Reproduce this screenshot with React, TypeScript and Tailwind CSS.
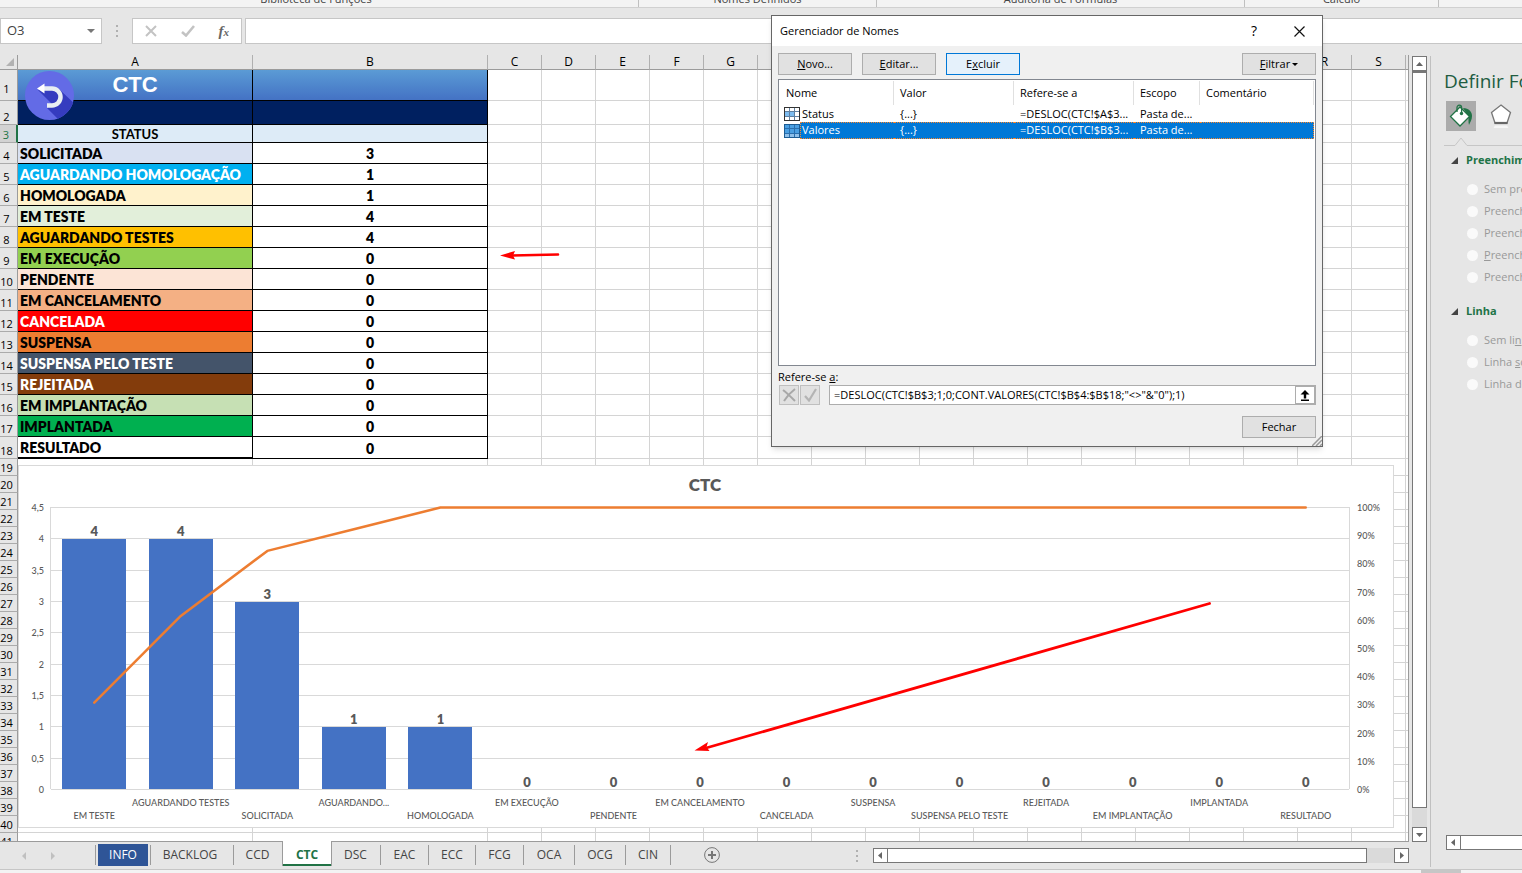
import type { ReactNode } from "react";
import { clsx } from "clsx";

const COLUMNS = "ABCDEFGHIJKLMNOPQRS".split("");

interface StatusRow {
  label: string;
  value: number;
  style: string;
}

const STATUS_ROWS: StatusRow[] = [
  { label: "SOLICITADA", value: 3, style: "bg-[#d9e1f2] text-black" },
  { label: "AGUARDANDO HOMOLOGAÇÃO", value: 1, style: "bg-[#00b0f0] text-white" },
  { label: "HOMOLOGADA", value: 1, style: "bg-[#fff2cc] text-black" },
  { label: "EM TESTE", value: 4, style: "bg-[#e2efda] text-black" },
  { label: "AGUARDANDO TESTES", value: 4, style: "bg-[#ffc000] text-black" },
  { label: "EM EXECUÇÃO", value: 0, style: "bg-[#92d050] text-black" },
  { label: "PENDENTE", value: 0, style: "bg-[#fce4d6] text-black" },
  { label: "EM CANCELAMENTO", value: 0, style: "bg-[#f4b084] text-black" },
  { label: "CANCELADA", value: 0, style: "bg-[#ff0000] text-white" },
  { label: "SUSPENSA", value: 0, style: "bg-[#ed7d31] text-black" },
  { label: "SUSPENSA PELO TESTE", value: 0, style: "bg-[#44546a] text-white" },
  { label: "REJEITADA", value: 0, style: "bg-[#833c0c] text-white" },
  { label: "EM IMPLANTAÇÃO", value: 0, style: "bg-[#c6e0b4] text-black" },
  { label: "IMPLANTADA", value: 0, style: "bg-[#00b050] text-black" },
  { label: "RESULTADO", value: 0, style: "bg-white text-black" },
];

const CHART_DATA = [
  { label: "EM TESTE", value: 4 },
  { label: "AGUARDANDO TESTES", value: 4 },
  { label: "SOLICITADA", value: 3 },
  { label: "AGUARDANDO...", value: 1 },
  { label: "HOMOLOGADA", value: 1 },
  { label: "EM EXECUÇÃO", value: 0 },
  { label: "PENDENTE", value: 0 },
  { label: "EM CANCELAMENTO", value: 0 },
  { label: "CANCELADA", value: 0 },
  { label: "SUSPENSA", value: 0 },
  { label: "SUSPENSA PELO TESTE", value: 0 },
  { label: "REJEITADA", value: 0 },
  { label: "EM IMPLANTAÇÃO", value: 0 },
  { label: "IMPLANTADA", value: 0 },
  { label: "RESULTADO", value: 0 },
];

const LEFT_TICKS = ["0", "0,5", "1", "1,5", "2", "2,5", "3", "3,5", "4", "4,5"];

const PLOT = { left: 33, top: 42, width: 1298, height: 282 };

function Ribbon() {
  return (
    <div className="flex h-2 shrink-0 overflow-hidden border-b border-[#d0d0d0] bg-[#f3f3f3] text-[11px] text-[#444444]">
      {[
        { label: "Biblioteca de Funções", width: "w-[639px] pr-1.5" },
        { label: "Nomes Definidos", width: "w-[238px]" },
        { label: "Auditoria de Fórmulas", width: "w-[368px]" },
        { label: "Cálculo", width: "w-[194px]" },
      ].map((g) => (
        <div
          key={g.label}
          className={clsx(
            "flex h-full shrink-0 items-end justify-center border-r border-[#c0c0c0] leading-4",
            g.width,
          )}
        >
          {g.label}
        </div>
      ))}
    </div>
  );
}

function FormulaBar() {
  return (
    <div className="flex h-[47px] shrink-0 items-start pt-2.5">
      <div className="flex h-[26px] w-[102px] items-center border border-[#c6c6c6] bg-white">
        <input
          aria-label="Caixa de nome"
          defaultValue="O3"
          className="w-20 bg-transparent pl-1.5 text-[13px] text-[#444444] outline-none"
        />
        <svg viewBox="0 0 8 4" className="ml-1.5 h-1 w-2 fill-[#777777]">
          <path d="M0 0h8L4 4z" />
        </svg>
      </div>
      <svg viewBox="0 0 2 12" className="mx-3.5 mt-[7px] h-3 w-0.5 fill-[#b0b0b0]">
        <path d="M0 0h2v2H0zM0 5h2v2H0zM0 10h2v2H0z" />
      </svg>
      <div className="flex h-[26px] w-[110px] items-center justify-between border border-[#c6c6c6] bg-white px-3">
        <button aria-label="Cancelar">
          <svg viewBox="0 0 12 12" className="h-3 w-3" fill="none" stroke="#c3c3c3" strokeWidth="2">
            <path d="M1 1l10 10M11 1L1 11" />
          </svg>
        </button>
        <button aria-label="Inserir">
          <svg viewBox="0 0 14 12" className="h-3 w-3.5" fill="none" stroke="#c3c3c3" strokeWidth="2.600">
            <path d="M1 7l4 3.500L13 1" />
          </svg>
        </button>
        <button
          aria-label="Inserir função"
          className="font-['Liberation_Serif',serif] text-[15px] leading-4 font-bold text-[#666666] italic"
        >
          f<span className="text-[11px]">x</span>
        </button>
      </div>
      <input
        aria-label="Barra de fórmulas"
        className="ml-[3px] h-[26px] min-w-0 flex-1 border border-r-0 border-[#c6c6c6] bg-white px-2 outline-none"
      />
    </div>
  );
}

function rowHeight(row: number) {
  if (row === 1) return "h-[31px] pb-1";
  if (row === 2) return "h-6";
  if (row === 3) return "h-[18px]";
  if (row < 18) return "h-[21px]";
  if (row === 18) return "h-[22px]";
  return "h-[17px]";
}

function dataCells(row: number): ReactNode {
  const black = "border-r border-b border-black p-0 whitespace-nowrap";
  if (row === 1) {
    return (
      <>
        <td
          className={clsx(
            black,
            "bg-linear-to-b from-[#5b9bd5] to-[#4472c4] text-center align-top font-['Liberation_Sans',sans-serif] text-[22px] leading-[29px] font-bold text-white",
          )}
        >
          CTC
        </td>
        <td className={clsx(black, "bg-linear-to-b from-[#5b9bd5] to-[#4472c4]")} />
      </>
    );
  }
  if (row === 2) {
    return (
      <>
        <td className={clsx(black, "bg-[#002060]")} />
        <td className={clsx(black, "bg-[#002060]")} />
      </>
    );
  }
  if (row === 3) {
    return (
      <>
        <td className={clsx(black, "bg-[#ddebf7] text-center text-[13px] leading-4 font-bold")}>
          STATUS
        </td>
        <td className={clsx(black, "bg-[#ddebf7]")} />
      </>
    );
  }
  const item = STATUS_ROWS[row - 4];
  if (item) {
    return (
      <>
        <td
          className={clsx(
            black,
            "pt-0.5 pl-0.5 text-sm leading-[18px] font-extrabold",
            item.style,
            row === 18 && "border-b-2",
          )}
        >
          {item.label}
        </td>
        <td className={clsx(black, "bg-white pt-0.5 text-center text-sm leading-[18px] font-extrabold")}>
          {item.value}
        </td>
      </>
    );
  }
  return (
    <>
      <td className="border-r border-b border-[#d4d4d4] bg-white p-0" />
      <td className="border-r border-b border-[#d4d4d4] bg-white p-0" />
    </>
  );
}

function Grid() {
  const rows = Array.from({ length: 41 }, (_, i) => i + 1);
  return (
    <table className="w-full table-fixed border-separate border-spacing-0 font-[Lato,sans-serif] text-black">
      <colgroup>
        <col className="w-[18px]" />
        {COLUMNS.map((c) => (
          <col key={c} className={c === "A" || c === "B" ? "w-[235px]" : "w-[54px]"} />
        ))}
        <col />
      </colgroup>
      <thead>
        <tr>
          <th className="h-[15px] border-r border-b border-[#9b9b9b] bg-[#e6e6e6] p-0">
            <svg viewBox="0 0 8 8" className="ml-1.5 h-2 w-2 fill-[#b2b2b2]">
              <path d="M8 0v8H0z" />
            </svg>
          </th>
          {COLUMNS.map((c) => (
            <th
              key={c}
              className="h-[15px] border-r border-b border-r-[#b0b0b0] border-b-[#9b9b9b] bg-[#e6e6e6] p-0 font-['Open_Sans',sans-serif] text-xs leading-3 font-normal"
            >
              {c}
            </th>
          ))}
          <th className="border-b border-[#9b9b9b] bg-[#e6e6e6] p-0" />
        </tr>
      </thead>
      <tbody>
        {rows.map((row) => (
          <tr key={row}>
            <th
              className={clsx(
                "border-b border-[#ababab] p-0 pr-1 align-bottom font-['Open_Sans',sans-serif] text-[11px] leading-[14px] font-normal",
                rowHeight(row),
                row === 3
                  ? "border-r-2 border-r-[#217346] bg-[#d2d2d2] text-[#217346]"
                  : "border-r border-r-[#9b9b9b] bg-[#e6e6e6]",
              )}
            >
              <div className="flex justify-center whitespace-nowrap">{row}</div>
            </th>
            {dataCells(row)}
            {COLUMNS.slice(2).map((c) => (
              <td key={c} className="border-r border-b border-[#d4d4d4] bg-white p-0" />
            ))}
            <td className="border-b border-[#d4d4d4] bg-white p-0" />
          </tr>
        ))}
      </tbody>
    </table>
  );
}

function BackButton() {
  return (
    <button aria-label="Voltar" className="absolute top-4 left-[25px] h-[49px] w-[49px]">
      <svg viewBox="0 0 49 49" className="h-full w-full">
        <defs>
          <clipPath id="disc">
            <circle cx="24.500" cy="24.500" r="24.500" />
          </clipPath>
        </defs>
        <circle cx="24.500" cy="24.500" r="24.500" fill="#636be6" />
        <path
          clipPath="url(#disc)"
          fill="#353cbf"
          d="M13 19L27 33l-5 4 14 14h16V35L34 18z"
        />
        <path d="M18 17.500h9a8.500 8.500 0 0 1 0 17h-5" fill="none" stroke="#e9eff2" strokeWidth="4.500" />
        <path d="M12 17.500l7.500-5v10z" fill="#ffffff" />
      </svg>
    </button>
  );
}

function ParetoChart() {
  const step = PLOT.width / CHART_DATA.length;
  const bottom = PLOT.top + PLOT.height;
  const total = CHART_DATA.reduce((sum, d) => sum + d.value, 0);
  const centre = (i: number) => PLOT.left + step * (i + 0.5);

  let running = 0;
  const points = CHART_DATA.map((d, i) => {
    running += d.value;
    return `${centre(i)},${bottom + 0.5 - (running / total) * PLOT.height}`;
  }).join(" ");

  return (
    <svg
      viewBox="0 0 1376 363"
      className="absolute top-[410px] left-[18px] h-[363px] w-[1376px] bg-white font-[Lato,sans-serif]"
      fill="#595959"
    >
      <rect x="0.500" y="0.500" width="1375" height="362" fill="none" stroke="#d9d9d9" />
      <text x="687" y="26" textAnchor="middle" className="text-[17px] font-extrabold">
        CTC
      </text>
      {LEFT_TICKS.map((t, i) => {
        const y = Math.round(bottom - (i * PLOT.height) / 9);
        return (
          <g key={t}>
            <path
              d={`M${PLOT.left} ${y + 0.5}H${PLOT.left + PLOT.width}`}
              stroke="#d9d9d9"
            />
            <text x="26" y={y + 4} textAnchor="end" className="text-[9px] font-medium">
              {t}
            </text>
          </g>
        );
      })}
      <path
        d={`M${PLOT.left - 0.5} ${PLOT.top}V${bottom}M${PLOT.left + PLOT.width + 0.5} ${PLOT.top}V${bottom}`}
        stroke="#d9d9d9"
      />
      {Array.from({ length: 11 }, (_, i) => (
        <text
          key={i}
          x="1339"
          y={Math.round(bottom - (i * PLOT.height) / 10) + 4}
          className="text-[9px] font-medium"
        >
          {i * 10}%
        </text>
      ))}
      {CHART_DATA.map((d, i) => {
        const top = Math.round(bottom - (d.value / 4.5) * PLOT.height);
        return (
          <g key={d.label} textAnchor="middle">
            {d.value > 0 && (
              <rect
                x={Math.round(centre(i) - 32)}
                y={top + 1}
                width="64"
                height={bottom - top - 1}
                fill="#4472c4"
              />
            )}
            <text x={centre(i)} y={top - 2} className="text-[13px] font-extrabold">
              {d.value}
            </text>
            <text x={centre(i)} y={i % 2 ? 341 : 354} className="text-[9px] font-medium">
              {d.label}
            </text>
          </g>
        );
      })}
      <polyline
        points={points}
        fill="none"
        stroke="#ed7d31"
        strokeWidth="2.500"
        strokeLinejoin="round"
        strokeLinecap="round"
      />
      {/* annotation arrow */}
      <path d="M1191.500 138.500L688 283" stroke="#ff0000" strokeWidth="2.800" strokeLinecap="round" />
      <path d="M676.500 285.500l13.500-8.500-1.500 5 3 4z" fill="#ff0000" />
    </svg>
  );
}

function ScrollArrow({ dir, label }: { dir: "up" | "down" | "left" | "right"; label: string }) {
  const paths = {
    up: "M3 9h7L6.500 5z",
    down: "M3 5h7L6.500 9z",
    left: "M8 3v7L4 6.500z",
    right: "M5 3v7l4-3.500z",
  };
  return (
    <button
      aria-label={label}
      className="h-[15px] w-[15px] shrink-0 border border-[#777777] bg-white"
    >
      <svg viewBox="0 0 13 13" className="h-[13px] w-[13px] fill-[#666666]">
        <path d={paths[dir]} />
      </svg>
    </button>
  );
}

function SheetTabs() {
  const tabs = [
    { name: "BACKLOG", width: "w-[83px] pr-1" },
    { name: "CCD", width: "w-[49px] pr-0.5" },
    { name: "CTC", width: "w-12" },
    { name: "DSC", width: "w-[50px]" },
    { name: "EAC", width: "w-12" },
    { name: "ECC", width: "w-[47px]" },
    { name: "FCG", width: "w-12" },
    { name: "OCA", width: "w-[51px]" },
    { name: "OCG", width: "w-[51px]" },
    { name: "CIN", width: "w-[45px]" },
  ];
  return (
    <div className="flex h-[27px] shrink-0 items-start text-xs text-[#444444]">
      <div className="flex h-full w-[95px] items-center gap-[25px] pl-[22px]">
        <svg viewBox="0 0 4 8" className="h-2 w-1 fill-[#c0c0c0]">
          <path d="M4 0v8L0 4z" />
        </svg>
        <svg viewBox="0 0 4 8" className="h-2 w-1 fill-[#c0c0c0]">
          <path d="M0 0v8l4-4z" />
        </svg>
      </div>
      <div className="mt-[3px] h-5 w-px bg-[#9b9b9b]" />
      <button className="mx-0.5 mt-0.5 h-[22px] w-[50px] bg-[#2f5597] text-white">INFO</button>
      <div className="mt-[3px] h-5 w-px bg-[#9b9b9b]" />
      {tabs.map((t) =>
        t.name === "CTC" ? (
          <button
            key={t.name}
            className="relative -mt-px h-[25px] w-12 border-b-2 border-[#217346] bg-white pt-1 leading-4 font-bold text-[#217346] shadow-[-1px_0_0_#9b9b9b,1px_0_0_#9b9b9b]"
          >
            {t.name}
          </button>
        ) : (
          <button
            key={t.name}
            className={clsx(
              "mt-[3px] h-5",
              t.name !== "CCD" && "border-r border-[#9b9b9b]",
              t.width,
            )}
          >
            {t.name}
          </button>
        ),
      )}
      <button aria-label="Nova planilha" className="mt-[5px] ml-[33px] h-4 w-4">
        <svg viewBox="0 0 16 16" className="h-4 w-4" fill="none" stroke="#777777">
          <circle cx="8" cy="8" r="7.400" />
          <path d="M8 4v8M4 8h8" strokeWidth="2" />
        </svg>
      </button>
      <div className="flex-1" />
      <svg viewBox="0 0 2 12" className="mt-2 mr-[15px] h-3 w-0.5 fill-[#b0b0b0]">
        <path d="M0 0h2v2H0zM0 5h2v2H0zM0 10h2v2H0z" />
      </svg>
      <div className="mt-1.5 mr-[21px] flex w-[536px] bg-[#dadada]">
        <ScrollArrow dir="left" label="Rolar para a esquerda" />
        <div className="h-[15px] w-[479px] border border-l-0 border-[#777777] bg-white" />
        <div className="flex-1" />
        <ScrollArrow dir="right" label="Rolar para a direita" />
      </div>
    </div>
  );
}

function PaneSection({
  title,
  name,
  options,
}: {
  title: string;
  name: string;
  options: { key: string; label: ReactNode }[];
}) {
  return (
    <section className="pb-[13px]">
      <h3 className="flex h-5 items-center gap-2 pl-5 text-[11px] font-bold text-[#217346]">
        <svg viewBox="0 0 7 7" className="h-[7px] w-[7px] shrink-0 fill-[#444444]">
          <path d="M7 0v7H0z" />
        </svg>
        {title}
      </h3>
      <div className="pt-2">
        {options.map((o) => (
          <label
            key={o.key}
            className="flex h-[22px] items-center gap-1.5 pl-9 text-[11px] text-[#999999]"
          >
            <input
              type="radio"
              name={name}
              disabled
              className="h-[11px] w-[11px] shrink-0 appearance-none rounded-full bg-[#fafafa]"
            />
            <span>{o.label}</span>
          </label>
        ))}
      </div>
    </section>
  );
}

function FormatPane() {
  return (
    <aside className="mt-px mb-0.5 flex w-[92px] shrink-0 flex-col overflow-hidden border-l border-[#c0c0c0] whitespace-nowrap">
      <h2 className="pt-2.5 pl-[13px] text-[19px] leading-[30px] text-[#215c41]">Definir Formato</h2>
      <div className="flex gap-2.5 pt-[5px] pl-[15px]">
        <button
          aria-label="Preenchimento e Linha"
          className="flex h-[30px] w-[30px] shrink-0 items-center justify-center bg-[#ababab]"
        >
          <svg viewBox="0 0 24 24" className="h-6 w-6">
            <path d="M14 4c6 0 9 4 9 8s-2 6-3 9c-1-3 0-6-1-9z" fill="#217346" />
            <path d="M11 3l9.500 9.500L11 22 1.500 12.500z" fill="#ffffff" stroke="#217346" strokeWidth="1.300" />
            <path d="M8 8V3.500a2.300 2.300 0 0 1 4.600 0V9" fill="none" stroke="#217346" strokeWidth="1.300" />
            <circle cx="12.500" cy="9.500" r="1.700" fill="#217346" />
          </svg>
        </button>
        <button
          aria-label="Efeitos"
          className="flex h-[30px] w-[30px] shrink-0 items-center justify-center"
        >
          <svg viewBox="0 0 24 26" className="h-[26px] w-6">
            <path d="M12 2l9.500 7.500L18 20H6L2.500 9.500z" fill="#ffffff" stroke="#777777" strokeWidth="1.300" />
            <path d="M5.500 20h13" stroke="#666666" strokeWidth="2.200" />
            <path d="M6 22.500h12l1.500 2.500h-15z" fill="#f6f6f6" />
          </svg>
        </button>
      </div>
      <svg
        viewBox="0 0 78 9"
        className="mt-1.5 ml-[13px] h-[9px] w-[78px] shrink-0"
        fill="none"
        stroke="#c6c6c6"
      >
        <path d="M0 8.500h11l6-7.500 6 7.500h55" />
      </svg>
      <div className="pt-1">
        <PaneSection
          title="Preenchimento"
          name="fill"
          options={[
            { key: "none", label: "Sem preenchimento" },
            { key: "solid", label: "Preenchimento sólido" },
            { key: "gradient", label: "Preenchimento gradual" },
            {
              key: "picture",
              label: (
                <>
                  <u>P</u>reenchimento com imagem
                </>
              ),
            },
            { key: "pattern", label: "Preenchimento de padrão" },
          ]}
        />
        <PaneSection
          title="Linha"
          name="line"
          options={[
            {
              key: "none",
              label: (
                <>
                  Sem li<u>n</u>ha
                </>
              ),
            },
            {
              key: "solid",
              label: (
                <>
                  Linha <u>s</u>ólida
                </>
              ),
            },
            { key: "gradient", label: "Linha de gradiente" },
          ]}
        />
      </div>
      <div className="mt-auto mb-[17px] ml-[15px] flex">
        <ScrollArrow dir="left" label="Rolar painel" />
        <div className="h-[15px] flex-1 border-y border-[#777777] bg-white" />
      </div>
    </aside>
  );
}

function DialogButton({ children, className }: { children: ReactNode; className?: string }) {
  return (
    <button
      className={clsx(
        "h-[22px] w-[74px] border text-center leading-5",
        className ?? "border-[#adadad] bg-[#e1e1e1]",
      )}
    >
      {children}
    </button>
  );
}

function NameIcon({ selected }: { selected?: boolean }) {
  return (
    <svg viewBox="0 0 16 14" className="h-3.5 w-4 shrink-0">
      <rect
        x="0.500"
        y="0.500"
        width="15"
        height="13"
        fill={selected ? "#8fc0ea" : "#ffffff"}
        stroke={selected ? "#1c5c94" : "#333333"}
      />
      <path d={selected ? "M1 1h14v8H1z" : "M1 5h10v4H1z"} fill={selected ? "#4a9fe2" : "#7dbcf0"} />
      <path
        d="M5.500 1v12M10.500 1v12M1 4.500h14M1 9.500h14"
        stroke={selected ? "#2a6fae" : "#5f7f9f"}
      />
    </svg>
  );
}

function NameManager() {
  const names = [
    { name: "Status", value: "{...}", refers: "=DESLOC(CTC!$A$3...", scope: "Pasta de..." },
    { name: "Valores", value: "{...}", refers: "=DESLOC(CTC!$B$3...", scope: "Pasta de..." },
  ];
  const headers = ["Nome", "Valor", "Refere-se a", "Escopo", "Comentário"];
  return (
    <div
      role="dialog"
      aria-labelledby="dialog-title"
      className="absolute top-[15px] left-[771px] w-[552px] border border-[#666666] bg-[#f0f0f0] text-[11px] text-black shadow-md"
    >
      <div className="flex h-[30px] items-center bg-white pr-4 pl-2">
        <h2 id="dialog-title" className="flex-1">
          Gerenciador de Nomes
        </h2>
        <button aria-label="Ajuda" className="mr-9 text-sm">
          ?
        </button>
        <button aria-label="Fechar janela">
          <svg
            viewBox="0 0 13 13"
            className="h-[13px] w-[13px]"
            fill="none"
            stroke="#111111"
            strokeWidth="1.200"
          >
            <path d="M1.500 1.500l10 10M11.500 1.500l-10 10" />
          </svg>
        </button>
      </div>
      <div className="px-1.5 pt-[7px] pb-2">
        <div className="flex gap-2.5">
          <DialogButton>
            <u>N</u>ovo...
          </DialogButton>
          <DialogButton>
            <u>E</u>ditar...
          </DialogButton>
          <DialogButton className="border-[#0078d7] bg-[#e5f1fb]">
            E<u>x</u>cluir
          </DialogButton>
          <div className="flex-1" />
          <DialogButton>
            <span className="inline-flex items-center gap-0.5">
              <span>
                <u>F</u>iltrar
              </span>
              <svg viewBox="0 0 6 3" className="h-[3px] w-1.5">
                <path d="M0 0h6L3 3z" />
              </svg>
            </span>
          </DialogButton>
        </div>
        <div className="mt-1 h-[287px] border border-[#828790] bg-white p-px">
          <table className="w-full table-fixed border-separate border-spacing-0">
            <colgroup>
              <col className="w-[114px]" />
              <col className="w-[120px]" />
              <col className="w-[120px]" />
              <col className="w-[66px]" />
              <col />
            </colgroup>
            <thead>
              <tr>
                {headers.map((h) => (
                  <th
                    key={h}
                    className="h-6 border-r border-[#e0e0e0] p-0 pl-1.5 text-left leading-4 font-normal"
                  >
                    {h}
                  </th>
                ))}
              </tr>
            </thead>
            <tbody>
              {names.map((n) => {
                const selected = n.name === "Valores";
                return (
                  <tr key={n.name} className={clsx(selected && "text-white")}>
                    <td className="h-[17px] p-0 pl-1">
                      <div className="flex items-center">
                        <NameIcon selected={selected} />
                        <span
                          className={clsx(
                            "flex-1",
                            selected
                              ? "border border-r-0 border-dotted border-[#ff8728] bg-[#0078d7] pb-px pl-px leading-[14px]"
                              : "pl-0.5 leading-[17px]",
                          )}
                        >
                          {n.name}
                        </span>
                      </div>
                    </td>
                    {[n.value, n.refers, n.scope, ""].map((text, i) => (
                      <td
                        key={i}
                        className={clsx(
                          "h-[17px] p-0 pl-1.5 whitespace-nowrap",
                          selected
                            ? "border-y border-dotted border-[#ff8728] bg-[#0078d7] pb-px leading-[14px]"
                            : "leading-4",
                          selected && i === 3 && "border-r",
                        )}
                      >
                        {text}
                      </td>
                    ))}
                  </tr>
                );
              })}
            </tbody>
          </table>
        </div>
        <label htmlFor="refers-to" className="mt-0.5 block leading-[17px]">
          Refere-se <u>a</u>:
        </label>
        <div className="flex">
          <button
            aria-label="Descartar"
            className="ml-px flex h-5 w-5 items-center justify-center border border-[#bfbfbf] bg-[#e1e1e1]"
          >
            <svg viewBox="0 0 14 14" className="h-3.5 w-3.5" fill="none" stroke="#a8a8a8" strokeWidth="2">
              <path d="M1 2c4 3 8 7 12 11M13 1C9 4 5 8 2 13" />
            </svg>
          </button>
          <button
            aria-label="Confirmar"
            className="ml-px flex h-5 w-5 items-center justify-center border border-[#bfbfbf] bg-[#e1e1e1]"
          >
            <svg viewBox="0 0 14 14" className="h-3.5 w-3.5" fill="none" stroke="#b4b4b4" strokeWidth="2.200">
              <path d="M2 8l4 4.500L13 1" />
            </svg>
          </button>
          <div className="ml-[9px] flex h-5 flex-1 border border-[#adadad] bg-white">
            <input
              id="refers-to"
              defaultValue={'=DESLOC(CTC!$B$3;1;0;CONT.VALORES(CTC!$B$4:$B$18;"<>"&"0");1)'}
              className="min-w-0 flex-1 pl-1 outline-none"
            />
            <button
              aria-label="Recolher"
              className="flex w-5 items-center justify-center border border-[#adadad] bg-white"
            >
              <svg viewBox="0 0 10 11" className="h-[11px] w-2.5">
                <path d="M5 0l4.500 4.500H6.200V8.500H3.800V4.500H0.500zM1 9.500h8V11H1z" />
              </svg>
            </button>
          </div>
        </div>
        <div className="flex justify-end pt-[11px]">
          <DialogButton>Fechar</DialogButton>
        </div>
      </div>
      <svg
        viewBox="0 0 10 10"
        className="absolute right-0 bottom-0 h-2.5 w-2.5"
        stroke="#999999"
        strokeWidth="1.500"
      >
        <path d="M0 10L10 0M4 10l6-6M8 10l2-2" />
      </svg>
    </div>
  );
}

export default function App() {
  return (
    <div className="relative flex h-screen flex-col overflow-hidden bg-[#e6e6e6] font-['Open_Sans',sans-serif]">
      <Ribbon />
      <FormulaBar />
      <div className="flex min-h-0 flex-1">
        <main className="flex min-w-0 flex-1 flex-col">
          <div className="flex min-h-0 flex-1">
            <div className="relative min-w-0 flex-1 overflow-hidden border-r border-b border-[#9b9b9b]">
              <Grid />
              <BackButton />
              <ParetoChart />
              <svg viewBox="0 0 60 12" className="absolute top-[194px] left-[500px] h-3 w-[60px]">
                <path d="M12 6.500L58 5.500" stroke="#ff0000" strokeWidth="2.600" strokeLinecap="round" />
                <path d="M0 6.500L15 2l-2 4.500 2 4z" fill="#ff0000" />
              </svg>
            </div>
            <div className="mt-px mr-[3px] ml-[3px] flex w-[15px] shrink-0 flex-col bg-[#dadada]">
              <ScrollArrow dir="up" label="Rolar para cima" />
              <div className="h-[737px] border border-t-2 border-[#777777] bg-white" />
              <div className="flex-1" />
              <ScrollArrow dir="down" label="Rolar para baixo" />
            </div>
          </div>
          <SheetTabs />
        </main>
        <FormatPane />
      </div>
      <footer className="flex h-1 shrink-0 justify-end border-t border-[#c6c6c6] bg-[#f3f3f3]">
        <div className="mr-[61px] w-10 bg-[#c6c6c6]" />
      </footer>
      <NameManager />
    </div>
  );
}
